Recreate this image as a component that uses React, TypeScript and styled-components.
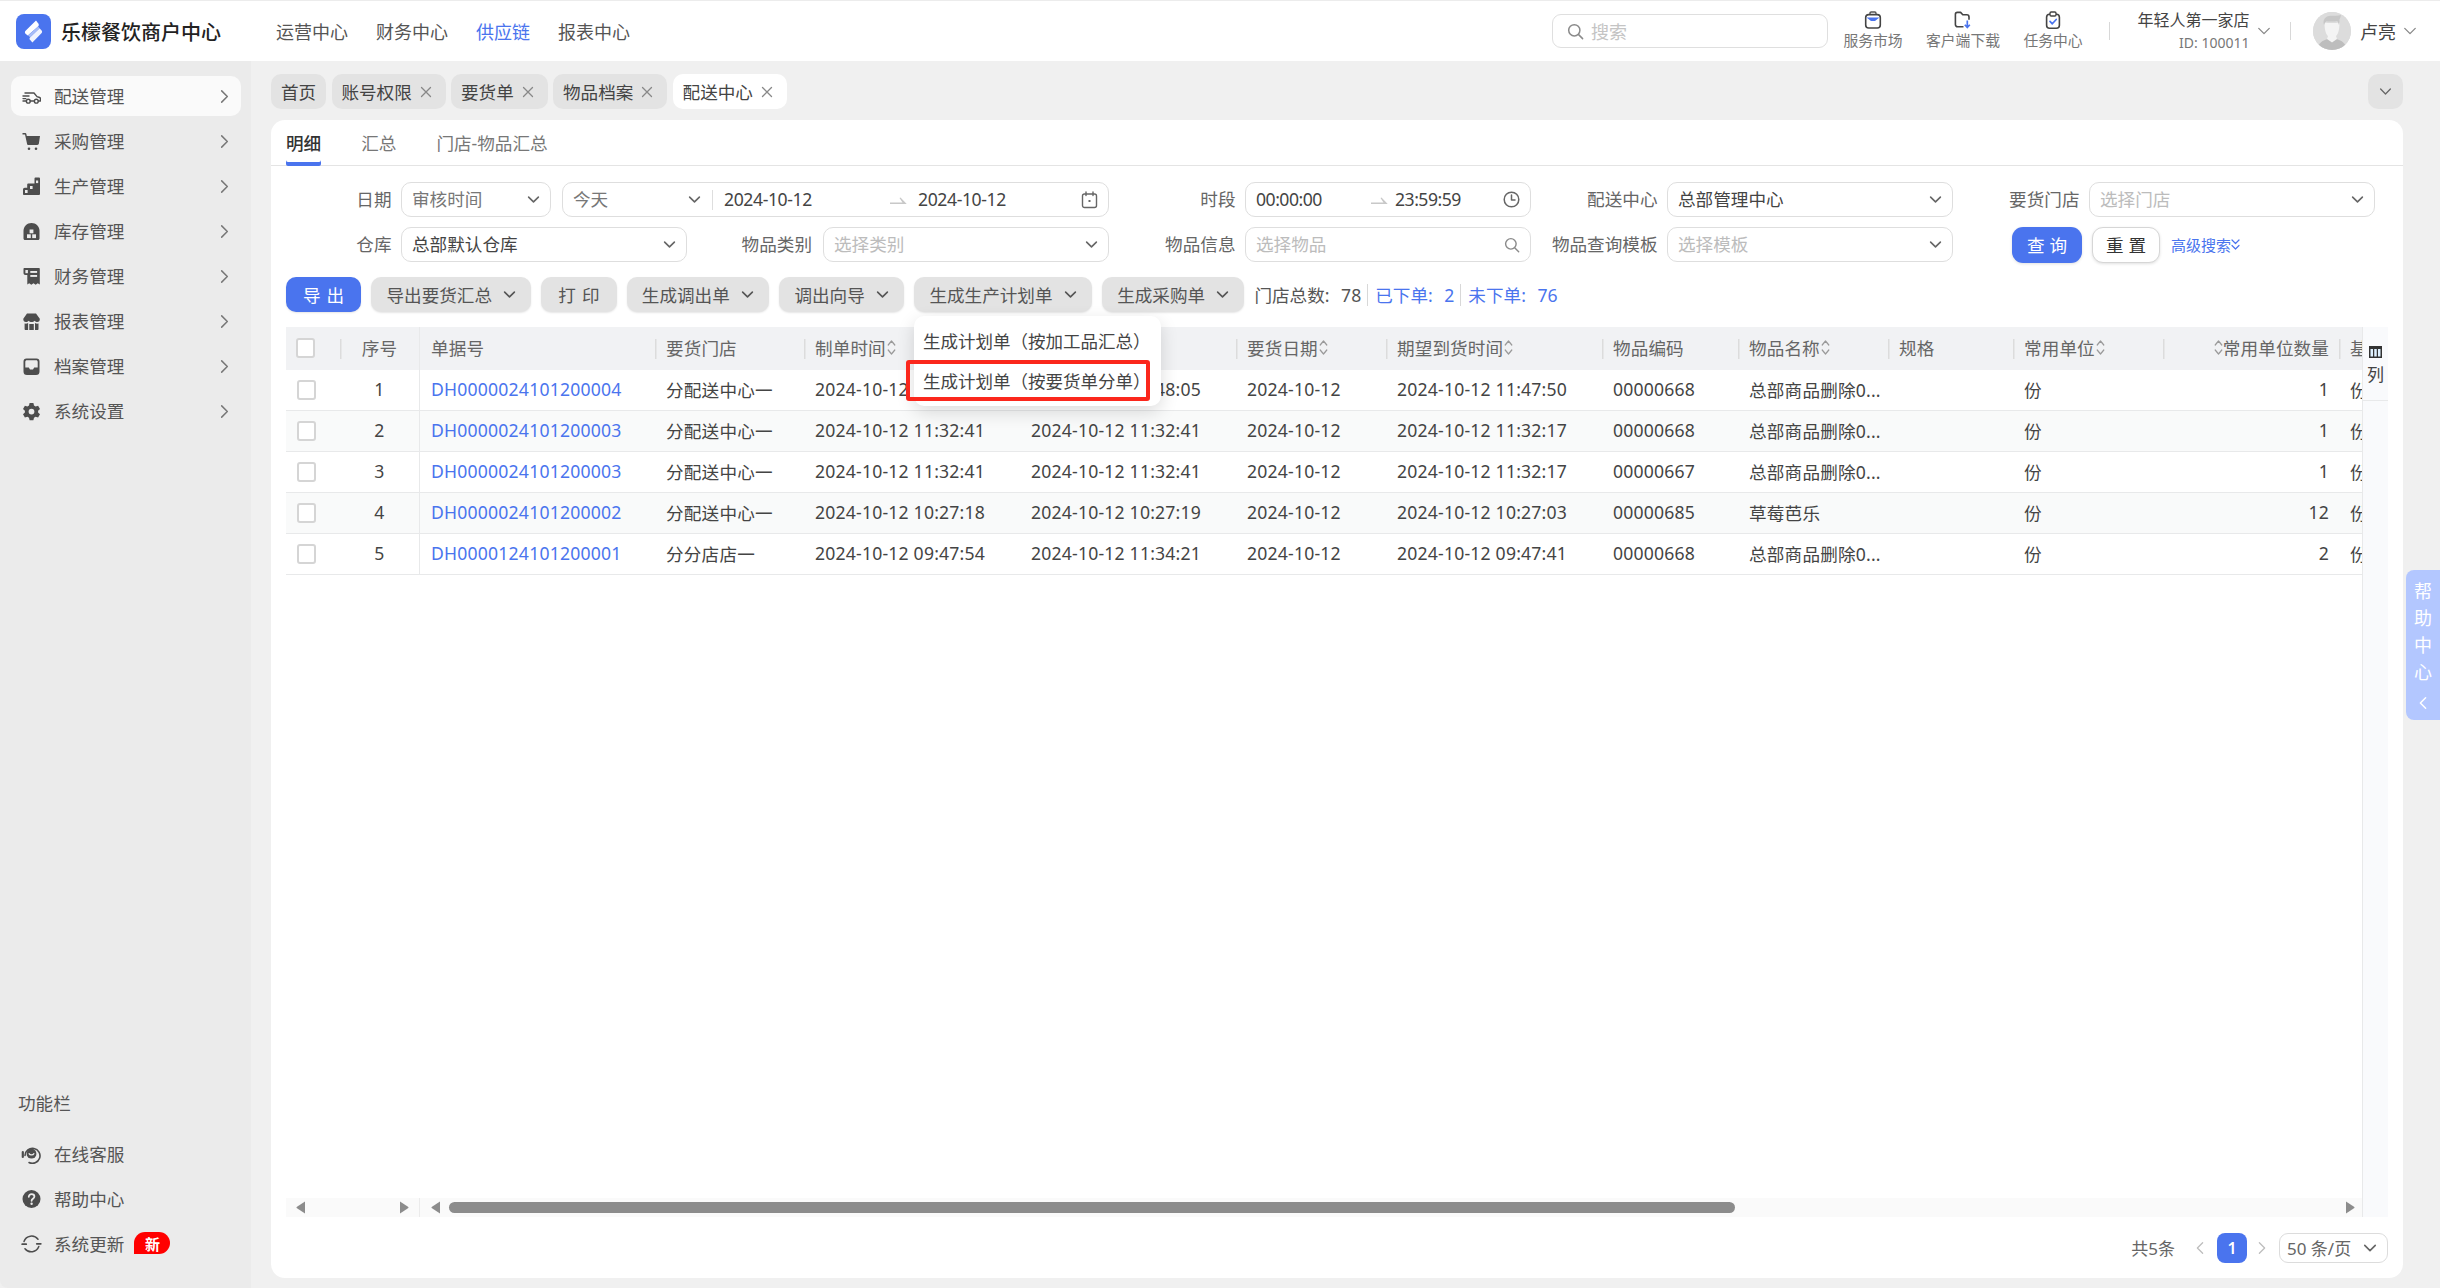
import React from 'react';
import styled, {createGlobalStyle} from 'styled-components';

const BLUE = '#4a74ee';
const FONT = `"Noto Sans", "Noto Sans CJK SC", sans-serif`;

const GlobalStyle = createGlobalStyle`
  html, body {
    margin: 0;
    padding: 0;
    background: #f0f0f0;
    font-family: ${FONT};
    color: #444;
  }
  * { box-sizing: border-box; }
`;

const Page = styled.div`
  height: 1288px;
  width: 2440px;
  display: flex;
  flex-direction: column;
  overflow: hidden;
  position: relative;
`;

/* ---------- top bar ---------- */
const Header = styled.header`
  height: 61px;
  flex: none;
  background: #fff;
  border-top: 1px solid #ececec;
  display: flex;
  align-items: center;
  padding: 0 23px 0 16px;
  & > svg { flex: none; }
`;
const Brand = styled.div`
  margin-left: 10px;
  font-size: 20px;
  font-weight: 500;
  color: #222;
  white-space: nowrap;
`;
const Nav = styled.nav`
  margin-left: 55px;
  display: flex;
  gap: 28px;
`;
const NavLink = styled.a<{$active?: boolean}>`
  font-size: 18px;
  color: ${p => (p.$active ? BLUE : '#555')};
`;
const Search = styled.div`
  margin-left: auto;
  width: 276px;
  height: 34px;
  border: 1.5px solid #dfdfdf;
  border-radius: 9px;
  display: flex;
  align-items: center;
  gap: 7px;
  padding-left: 14px;
  font-size: 18px;
  color: #c4c4c4;
`;
const HeadTool = styled.div`
  width: 90px;
  display: flex;
  flex-direction: column;
  align-items: center;
  gap: 1px;
  font-size: 14.8px;
  line-height: 21px;
  color: #777;
  white-space: nowrap;
  &:first-of-type { margin-left: 1px; }
`;
const HeadDivider = styled.div<{$left: number}>`
  width: 1.5px;
  height: 18px;
  background: #d8d8d8;
  margin-left: ${p => p.$left}px;
`;
const StoreInfo = styled.div`
  margin-left: 27px;
  text-align: right;
  white-space: nowrap;
`;
const StoreName = styled.div`
  font-size: 16px;
  line-height: 23px;
  color: #444;
`;
const StoreId = styled.div`
  font-size: 14px;
  line-height: 22px;
  color: #777;
`;
const HeadChevron = styled.div<{$left: number}>`
  margin-left: ${p => p.$left}px;
  display: flex;
  align-self: center;
  color: #888;
`;
const Avatar = styled.div`
  margin-left: 22px;
  width: 38px;
  height: 38px;
  border-radius: 50%;
  overflow: hidden;
  background: #dcdcdc;
  display: flex;
`;
const UserName = styled.div`
  margin-left: 9px;
  font-size: 18px;
  color: #444;
`;

/* ---------- body ---------- */
const Body = styled.div`
  flex: 1;
  display: flex;
  min-height: 0;
`;
const Sidebar = styled.aside`
  width: 251px;
  flex: none;
  background: #ebebeb;
  padding: 15px 10px 19px 11px;
  display: flex;
  flex-direction: column;
  border-bottom-left-radius: 8px;
`;
const SideItem = styled.div<{$active?: boolean; $tool?: boolean}>`
  height: 40px;
  flex: none;
  margin-bottom: 5px;
  border-radius: 10px;
  background: ${p => (p.$active ? '#fafafa' : 'transparent')};
  display: flex;
  align-items: center;
  padding: 0 9px 2px ${p => (p.$tool ? 10 : 11)}px;
  font-size: 17.6px;
  color: #555;
  & > svg:first-child {
    flex: none;
    margin: 2px ${p => (p.$tool ? 12 : 13)}px 0 0;
  }
`;
const SideArrow = styled.span`
  margin-left: auto;
  display: flex;
  color: #777;
  padding-top: 2px;
`;
const SideSpacer = styled.div`
  flex: 1;
`;
const SideTitle = styled.div`
  font-size: 17.6px;
  color: #555;
  margin: 0 0 18px 7px;
  line-height: 26px;
`;
const Badge = styled.span`
  margin-left: 10px;
  width: 36px;
  height: 22px;
  border-radius: 11px 11px 11px 0;
  background: #f00;
  color: #fff;
  font-size: 15px;
  font-weight: 700;
  display: flex;
  align-items: center;
  justify-content: center;
`;

const Main = styled.main`
  flex: 1;
  min-width: 0;
  padding: 13px 37px 10px 20px;
  display: flex;
  flex-direction: column;
`;
const TabBar = styled.div`
  height: 35px;
  flex: none;
  display: flex;
  gap: 5.7px;
  margin-bottom: 11px;
`;
const PageTab = styled.div<{$active?: boolean; $plain?: boolean}>`
  height: 35px;
  border-radius: 10px;
  background: ${p => (p.$active ? '#fff' : '#e3e3e3')};
  display: flex;
  align-items: center;
  gap: 8px;
  padding: 0 ${p => (p.$plain ? 10 : 14)}px 0 ${p => (p.$plain ? 10 : 9.5)}px;
  font-size: 17.6px;
  color: #444;
  white-space: nowrap;
`;
const TabClose = styled.span`
  display: flex;
  color: #888;
`;
const TabMore = styled.div`
  margin-left: auto;
  width: 35px;
  height: 35px;
  border-radius: 10px;
  background: #e3e3e3;
  color: #666;
  display: flex;
  align-items: center;
  justify-content: center;
`;

const Card = styled.section`
  flex: 1;
  min-height: 0;
  background: #fff;
  border-radius: 14px;
  display: flex;
  flex-direction: column;
`;
const SubTabs = styled.div`
  height: 46px;
  flex: none;
  border-bottom: 1.5px solid #e4e4e4;
  display: flex;
  gap: 40px;
  padding-left: 15px;
`;
const SubTab = styled.div<{$active?: boolean}>`
  height: 46px;
  line-height: 47px;
  font-size: 17.6px;
  font-weight: ${p => (p.$active ? 500 : 400)};
  color: ${p => (p.$active ? '#333' : '#777')};
  box-shadow: ${p => (p.$active ? `inset 0 -4px 0 ${BLUE}` : 'none')};
  border-radius: 0 0 2px 2px;
`;

/* ---------- filters ---------- */
const Filters = styled.div`
  margin-top: 16px;
  display: grid;
  grid-template-columns: 130px 708px 136px 286px 136px 286px 136px 286px;
  grid-auto-rows: 35px;
  row-gap: 10px;
  align-items: center;
`;
const FieldLabel = styled.label<{$pad?: number}>`
  text-align: right;
  padding-right: ${p => p.$pad ?? 9.5}px;
  padding-bottom: 2px;
  font-size: 17.6px;
  color: #666;
  white-space: nowrap;
`;
const Box = styled.div<{$width?: number}>`
  height: 35px;
  flex: ${p => (p.$width ? `none` : 1)};
  width: ${p => (p.$width ? `${p.$width}px` : 'auto')};
  min-width: 0;
  border: 1.5px solid #dedede;
  border-radius: 10px;
  display: flex;
  align-items: center;
  padding: 0 10px;
  font-size: 17.6px;
  white-space: nowrap;
`;
const FieldSplit = styled.div`
  display: flex;
  gap: 11px;
`;
const FieldTrio = styled.div`
  display: grid;
  grid-template-columns: 286px 136px 286px;
  align-items: center;
`;
const Value = styled.span<{$tone?: 'dark' | 'muted' | 'holder'}>`
  color: ${p => (p.$tone === 'muted' ? '#777' : p.$tone === 'holder' ? '#bcbcbc' : '#444')};
  padding-bottom: 2px;
`;
const BoxIcon = styled.span`
  margin-left: auto;
  display: flex;
  color: #666;
`;
const RangeSelect = styled.div`
  width: 140px;
  flex: none;
  height: 20px;
  display: flex;
  align-items: center;
  padding-right: 11px;
  border-right: 1.5px solid #dedede;
`;
const RangeValue = styled.span<{$width: number; $first?: boolean; $tight?: boolean}>`
  width: ${p => p.$width}px;
  flex: none;
  margin-left: ${p => (p.$first ? 11 : 0)}px;
  color: #444;
  letter-spacing: ${p => (p.$tight ? -0.5 : -0.4)}px;
  padding-bottom: 1px;
`;
const RangeArrow = styled.span<{$width: number}>`
  width: ${p => p.$width}px;
  flex: none;
  display: flex;
  color: #c8c8c8;
`;
const FilterActions = styled.div`
  grid-column: 7 / 9;
  display: flex;
  align-items: center;
  padding-left: 59px;
  gap: 10px;
  white-space: nowrap;
`;
const ActionButton = styled.button<{$primary?: boolean}>`
  height: 36px;
  width: ${p => (p.$primary ? 70 : 68)}px;
  border-radius: 11px;
  border: ${p => (p.$primary ? 'none' : '1.5px solid #d6d6d6')};
  background: ${p => (p.$primary ? BLUE : '#fff')};
  color: ${p => (p.$primary ? '#fff' : '#333')};
  font: 400 17.6px ${FONT};
  letter-spacing: 5px;
  text-indent: 5px;
  padding: 0;
  box-shadow: 0 1px 3px rgba(0, 0, 0, 0.12);
`;
const AdvancedLink = styled.a`
  font-size: 15px;
  color: ${BLUE};
  display: flex;
  align-items: center;
  margin-left: 1px;
`;

/* ---------- toolbar ---------- */
const Toolbar = styled.div`
  margin: 15px 15px 0;
  display: flex;
  align-items: center;
  gap: 10px;
  height: 35px;
  flex: none;
`;
const ToolWrap = styled.div`
  position: relative;
  display: flex;
`;
const ToolButton = styled.button<{$primary?: boolean}>`
  height: 35px;
  border: none;
  border-radius: 10px;
  background: ${p => (p.$primary ? BLUE : '#e3e3e3')};
  color: ${p => (p.$primary ? '#fff' : '#555')};
  font: 400 17.6px ${FONT};
  display: flex;
  align-items: center;
  gap: 11px;
  padding: 0 15.3px;
  white-space: nowrap;
  box-shadow: 0 1px 2px rgba(0, 0, 0, 0.1);
`;
const SpacedText = styled.span`
  letter-spacing: 6px;
  margin-right: -6px;
  padding: 0 1.7px;
`;
const Stats = styled.div`
  display: flex;
  align-items: center;
  font-size: 17.6px;
  word-spacing: 7px;
  white-space: nowrap;
`;
const Stat = styled.span<{$blue?: boolean; $sep?: boolean}>`
  color: ${p => (p.$blue ? BLUE : '#555')};
  padding: 0 6px 0 ${p => (p.$sep ? 7 : 0)}px;
  border-left: ${p => (p.$sep ? '1px solid #d8d8d8' : 'none')};
  line-height: 22px;
`;
const Menu = styled.div`
  position: absolute;
  top: calc(100% + 4px);
  left: 0;
  width: 247px;
  padding: 6px 0 4px 9px;
  background: #fff;
  border-radius: 10px;
  box-shadow: 0 6px 18px rgba(0, 0, 0, 0.14);
  z-index: 5;
`;
const MenuItem = styled.div`
  height: 40px;
  line-height: 38px;
  font-size: 17.5px;
  color: #444;
  white-space: nowrap;
`;
const RedFrame = styled.div`
  position: absolute;
  left: -8px;
  top: 44px;
  width: 244px;
  height: 41px;
  border: 4px solid #fb271c;
  border-radius: 3px;
`;

/* ---------- table ---------- */
const COLS = '54px 80px 235px 149px 216px 216px 150px 216px 136px 150px 125px 150px 176px 40px';

const TableBlock = styled.div`
  margin: 15px 15px 0;
  flex: 1;
  min-height: 0;
  display: flex;
`;
const TableMain = styled.div`
  flex: 1;
  min-width: 0;
  overflow: hidden;
  display: flex;
  flex-direction: column;
`;
const HeadRow = styled.div`
  height: 43px;
  flex: none;
  display: grid;
  grid-template-columns: ${COLS};
  background: #f1f2f4;
  align-items: center;
`;
const HeadCell = styled.div<{$sep?: boolean; $right?: boolean; $center?: boolean; $check?: boolean; $edge?: boolean}>`
  height: 43px;
  display: flex;
  align-items: center;
  justify-content: ${p => (p.$right ? 'flex-end' : p.$center ? 'center' : 'flex-start')};
  padding: 0 ${p => (p.$right ? 10 : 0)}px 2px ${p => (p.$check ? 10 : p.$right || p.$center ? 0 : 11)}px;
  font-size: 17.6px;
  letter-spacing: 0.1px;
  color: #666;
  white-space: nowrap;
  background: ${p => (p.$sep ? 'linear-gradient(#dcdcdc, #dcdcdc) left center / 1.5px 20px no-repeat' : 'none')};
  border-right: ${p => (p.$edge ? '1.5px solid #e8e9ea' : 'none')};
`;
const Row = styled.div<{$striped?: boolean}>`
  height: 41px;
  flex: none;
  display: grid;
  grid-template-columns: ${COLS};
  align-items: center;
  background: ${p => (p.$striped ? '#f9fafa' : '#fff')};
  border-bottom: 1.5px solid #e8e9ea;
`;
const Cell = styled.div<{$right?: boolean; $center?: boolean; $edge?: boolean; $check?: boolean}>`
  height: 100%;
  display: flex;
  align-items: center;
  justify-content: ${p => (p.$right ? 'flex-end' : p.$center ? 'center' : 'flex-start')};
  padding: 0 ${p => (p.$right ? 10 : 0)}px ${p => (p.$check ? 0 : 2)}px ${p => (p.$check ? 11 : p.$right || p.$center ? 0 : 11)}px;
  font-size: 17.6px;
  letter-spacing: 0.2px;
  color: #444;
  white-space: nowrap;
  overflow: hidden;
  border-right: ${p => (p.$edge ? '1.5px solid #e8e9ea' : 'none')};
`;
const DocLink = styled.a`
  color: ${BLUE};
`;
const Check = styled.span`
  width: 19px;
  height: 20px;
  flex: none;
  background: #fff;
  border: 2.5px solid #d5d5d5;
  border-radius: 3px;
`;
const TableFill = styled.div`
  flex: 1;
`;
const ScrollRow = styled.div`
  height: 19px;
  flex: none;
  background: #fafafa;
  display: flex;
  align-items: center;
  color: #8c8c8c;
`;
const ScrollFixed = styled.div`
  width: 134px;
  height: 19px;
  flex: none;
  display: flex;
  align-items: center;
  justify-content: space-between;
  padding: 0 10px;
  border-right: 1.5px solid #ebebeb;
`;
const ScrollTrack = styled.div`
  flex: 1;
  display: flex;
  align-items: center;
  padding: 0 7px 0 11px;
`;
const Thumb = styled.div`
  width: 1286px;
  height: 11px;
  margin-left: 8px;
  border-radius: 6px;
  background: #8c8c8c;
`;
const ScrollEnd = styled.span`
  margin-left: auto;
  display: flex;
`;
const ColPanel = styled.div`
  width: 26px;
  flex: none;
  background: #f9fafc;
  border-left: 1.5px solid #e8e9ea;
`;
const ColToggle = styled.div`
  height: 74px;
  border-bottom: 1.5px solid #e8e9ea;
  display: flex;
  flex-direction: column;
  align-items: center;
  padding-top: 19px;
  font-size: 17px;
  line-height: 26px;
  color: #444;
  gap: 4px;
  & > svg { flex: none; }
`;

const Pager = styled.div`
  height: 61px;
  flex: none;
  padding: 0 15px;
  display: flex;
  align-items: center;
  justify-content: flex-end;
  font-size: 17px;
  color: #666;
`;
const PagerArrow = styled.span<{$left: number; $right: number}>`
  display: flex;
  margin: 0 ${p => p.$right}px 0 ${p => p.$left}px;
  color: #bdbdbd;
`;
const PagerCurrent = styled.span`
  width: 30px;
  height: 30px;
  border-radius: 8px;
  background: ${BLUE};
  color: #fff;
  font-weight: 600;
  font-size: 16px;
  display: flex;
  align-items: center;
  justify-content: center;
`;
const PageSize = styled.div`
  width: 109px;
  height: 30px;
  border: 1.5px solid #dcdcdc;
  border-radius: 9px;
  display: flex;
  align-items: center;
  justify-content: space-between;
  padding: 0 10px 0 7px;
  white-space: nowrap;
`;

const HelpTab = styled.div`
  position: absolute;
  right: 0;
  top: 570px;
  width: 34px;
  height: 150px;
  background: #b3c7ff;
  border-radius: 8px 0 0 8px;
  color: #fff;
  font-size: 18px;
  line-height: 27px;
  display: flex;
  flex-direction: column;
  align-items: center;
  padding-top: 8px;
  & > svg { margin-top: 10px; }
`;

/* ---------- drawings ---------- */
const Chevron = ({size = 13, dir = 'down', sw = 1.6}: {size?: number; dir?: 'down' | 'up' | 'left' | 'right'; sw?: number}) => {
  const points = {
    down: '2,5 8,11 14,5',
    up: '2,11 8,5 14,11',
    left: '11,2 5,8 11,14',
    right: '5,2 11,8 5,14',
  }[dir];
  return (
    <svg width={size} height={size} viewBox="0 0 16 16" fill="none" stroke="currentColor" strokeWidth={sw * 16 / size} strokeLinecap="round" strokeLinejoin="round">
      <polyline points={points} />
    </svg>
  );
};

const CloseX = () => (
  <svg width="12" height="12" viewBox="0 0 12 12" stroke="currentColor" strokeWidth="1.3" strokeLinecap="round">
    <path d="M1.5 1.5l9 9M10.5 1.5l-9 9" />
  </svg>
);

const SortSvg = styled.svg`
  flex: none;
  margin-left: 1px;
`;
const Sort = () => (
  <SortSvg width="9" height="17" viewBox="0 0 9 17" fill="none" stroke="#9a9a9a" strokeWidth="1.2" strokeLinecap="round" strokeLinejoin="round">
    <path d="M1.2 6L4.5 2l3.3 4M1.2 11l3.3 4 3.3-4" />
  </SortSvg>
);

const Tri = ({dir}: {dir: 'left' | 'right'}) => (
  <svg width="10" height="13" viewBox="0 0 10 13" fill="currentColor">
    <path d={dir === 'left' ? 'M9 .5v12L1 7.3a1 1 0 0 1 0-1.6z' : 'M1 .5v12l8-5.2a1 1 0 0 0 0-1.6z'} />
  </svg>
);

const Logo = () => (
  <svg width="35" height="35" viewBox="0 0 35 35">
    <rect width="35" height="35" rx="8" fill={BLUE} />
    <path d="M20 6.5L9.6 16.8c-1 1-.9 2.4.2 3.3l2 1.5c3.2-3.2 7-5.8 10.2-9 1.2-1.2 1-2.6-.1-3.6z" fill="#fff" />
    <path d="M23.6 14.2l-9.4 9c-1 1-.8 2 0 2.8l2.2 2.4 8.8-8.8c1.2-1.2 1.2-2.4.2-3.4z" fill="#fff" opacity="0.92" />
    <path d="M12 21.6c3.2-3.2 7-5.8 10.2-9l1.4 1.6-9.4 9z" fill="#a9bdf7" />
  </svg>
);

const SearchIcon = ({size = 17}: {size?: number}) => (
  <svg width={size} height={size} viewBox="0 0 17 17" fill="none" stroke="#8a8a8a" strokeWidth="1.5" strokeLinecap="round">
    <circle cx="7.3" cy="7.3" r="5.6" />
    <path d="M11.6 11.6l4 4" />
  </svg>
);

const MarketIcon = () => (
  <svg width="18" height="18" viewBox="0 0 18 18" fill="none">
    <path d="M6 3.5V2.2C6 1.5 6.5 1 7.2 1h3.6c.7 0 1.2.5 1.2 1.2v1.3" stroke="#555" strokeWidth="1.4" />
    <rect x="1.7" y="3.6" width="14.6" height="13.4" rx="3" stroke="#444" strokeWidth="1.6" />
    <path d="M2.5 6.6h13L11 10H7z" fill={BLUE} />
  </svg>
);
const DownloadIcon = () => (
  <svg width="18" height="18" viewBox="0 0 18 18" fill="none">
    <path d="M9.5 15.8H3.6A2.2 2.2 0 0 1 1.4 13.6V3.4c0-1 .8-2 2-2h3.2l2.2 2.4h4c1.2 0 2.2 1 2.2 2.2v2.8" stroke="#444" strokeWidth="1.6" strokeLinejoin="round" />
    <path d="M13.3 9.5v6.5M10.8 13.7l2.5 2.8 2.5-2.8" stroke={BLUE} strokeWidth="1.7" strokeLinejoin="round" />
  </svg>
);
const TaskIcon = () => (
  <svg width="18" height="18" viewBox="0 0 18 18" fill="none">
    <rect x="2.6" y="3.2" width="12.8" height="14" rx="3" stroke="#444" strokeWidth="1.6" />
    <rect x="6" y="1" width="6" height="4" rx="1.2" fill="#fff" stroke="#444" strokeWidth="1.4" />
    <path d="M6 10.4l2.3 2.4L12.2 8.5" stroke={BLUE} strokeWidth="1.7" strokeLinecap="round" strokeLinejoin="round" />
  </svg>
);
const AvatarArt = () => (
  <svg width="38" height="38" viewBox="0 0 38 38">
    <rect width="38" height="38" fill="#dcdcdc" />
    <path d="M4 38c1-7 6-10 11-11h8c5 1 10 4 11 11z" fill="#bdbdbd" />
    <path d="M14 27l5 3.5 5-3.5-1-3h-8z" fill="#f4f4f4" />
    <path d="M11.5 10.5c0 9 2 15 7.5 15s7.5-6 7.5-15c-4 .8-11 .8-15 0z" fill="#f4f4f4" />
    <path d="M11 13C9.5 8 12 4 18 3.8c3-.1 7 .2 10-.8-.4 2.4-1 3.5-1.6 4.6.2 2 .1 3.8-.4 5.4-.6-2-1-3-1.8-4-3.6.8-7.6.6-11 .2-1 1-1.8 2.4-2.2 3.8z" fill="#c7c7c7" />
  </svg>
);

const IconBase = ({children}: {children: React.ReactNode}) => (
  <svg width="19" height="19" viewBox="0 0 19 19" fill="#4d4d4d">{children}</svg>
);
const TruckIcon = () => (
  <IconBase>
    <path d="M3 6h9l3 3.6 2.6.9c.6.2.9.7.9 1.3V14h-2M4.300 14H1M8.300 14h4M1 9h6M1 11.600h2.800" fill="none" stroke="#4d4d4d" strokeWidth="1.4" strokeLinecap="round" strokeLinejoin="round" />
    <circle cx="6.300" cy="14.200" r="1.900" fill="none" stroke="#4d4d4d" strokeWidth="1.4" />
    <circle cx="14.300" cy="14.200" r="1.900" fill="none" stroke="#4d4d4d" strokeWidth="1.4" />
  </IconBase>
);
const CartIcon = () => (
  <IconBase>
    <path d="M.5 1h2.800c.5 0 .9.3 1 .8L4.800 4H18l-1.100 7.600c-.1.800-.8 1.400-1.600 1.400H6.300c-.6 0-1.100-.4-1.200-1L3 2.500H.5z" />
    <circle cx="7" cy="16.700" r="1.300" />
    <circle cx="14" cy="16.700" r="1.300" />
  </IconBase>
);
const ProdIcon = () => (
  <IconBase>
    <path d="M12.500 1.500c0-.5.400-.9.900-.9h3.700c.5 0 .9.400.9.900V17c0 .5-.4.900-.9.900H2c-.5 0-1-.4-1-1v-4.400c0-1 .8-1.700 1.800-1.700h2.400V7.500c0-.5.400-.9.900-.9h6.400z" />
    <rect x="3" y="13" width="2.600" height="3" fill="#ebebeb" />
    <rect x="8" y="9" width="2.600" height="3" fill="#ebebeb" />
    <rect x="14" y="3.500" width="2.200" height="2.600" fill="#ebebeb" />
  </IconBase>
);
const StockIcon = () => (
  <IconBase>
    <path d="M9.500 1C5 1 1.500 4.500 1.500 9v7.500c0 .8.600 1.500 1.500 1.500h13c.9 0 1.500-.7 1.500-1.500V9c0-4.500-3.500-8-8-8z" />
    <rect x="7.600" y="7.500" width="3.800" height="3.800" fill="#ebebeb" />
    <rect x="5" y="12.300" width="3.800" height="3.800" fill="#ebebeb" />
    <rect x="10.200" y="12.300" width="3.800" height="3.800" fill="#ebebeb" />
  </IconBase>
);
const BillIcon = () => (
  <IconBase>
    <path d="M2.500 1h14.300c.6 0 1 .4 1 1v15.500l-2.100-1.300-2 1.500-2.200-1.500-2.200 1.500-2.100-1.500-1.900 1.300V8H3.500c-1.300 0-2-1-2-2V2c0-.6.400-1 1-1z" />
    <rect x="8.300" y="4" width="6.800" height="1.900" fill="#ebebeb" />
    <rect x="8.300" y="8" width="6.800" height="1.900" fill="#ebebeb" />
    <rect x="3.400" y="3" width="2.500" height="3.200" fill="#ebebeb" />
  </IconBase>
);
const ShopIcon = () => (
  <IconBase>
    <path d="M5 1.500h9l3.800 5.200c.3 2-1 3.300-2.500 3.300-1 0-2-.5-2.700-1.300-.7.800-1.700 1.300-3 1.300s-2.200-.5-3-1.300C6 9.500 5 10 4 10 2.400 10 1 8.700 1.300 6.700z" />
    <path d="M2.600 11.500c1.300.3 2.500.1 3.500-.5v6.900H3.600c-.6 0-1-.4-1-1zM16.500 11.500c-1.300.3-2.500.1-3.500-.5v6.900h2.500c.6 0 1-.4 1-1zM7.300 12h4.500v5.900H7.300z" />
  </IconBase>
);
const ArchiveIcon = () => (
  <IconBase>
    <path d="M4.500 1.500h10a3 3 0 0 1 3 3v10a3.500 3.500 0 0 1-3.500 3.500H5a3.500 3.500 0 0 1-3.500-3.500v-10a3 3 0 0 1 3-3z" />
    <path d="M3.300 10.500V4.800c0-.9.700-1.500 1.500-1.500h9.400c.8 0 1.500.6 1.500 1.500v5.700h-3.500l-1.200 2h-3l-1.200-2z" fill="#ebebeb" />
  </IconBase>
);
const GearIcon = () => (
  <IconBase>
    <path fillRule="evenodd" d="M7.600 1h3.800l.6 2.500 1.600.9 2.500-.7 1.900 3.200-1.900 1.800v1.800l1.900 1.800-1.900 3.200-2.500-.7-1.600.9-.6 2.500H7.600L7 15.700l-1.600-.9-2.500.7L1 12.300l1.900-1.800V8.700L1 6.900l1.900-3.200 2.500.7L7 3.500zM9.500 6.700a2.900 2.900 0 1 0 0 5.800 2.900 2.900 0 0 0 0-5.800z" />
  </IconBase>
);
const ServiceIcon = () => (
  <svg width="21" height="20" viewBox="0 0 21 20" fill="none" stroke="#4d4d4d">
    <path d="M4 11.500a7.500 7.500 0 1 1 4 7" strokeWidth="1.600" strokeLinecap="round" />
    <circle cx="10.500" cy="9.700" r="4.900" fill="#4d4d4d" stroke="none" />
    <path d="M8.200 9.700c.5 1.500 4 1.500 4.600 0" stroke="#ebebeb" strokeWidth="1.300" strokeLinecap="round" />
    <path d="M1.800 8v5" strokeWidth="2.200" strokeLinecap="round" />
  </svg>
);
const HelpIcon = () => (
  <svg width="21" height="20" viewBox="0 0 21 20">
    <circle cx="10.500" cy="10" r="9" fill="#4d4d4d" />
    <path d="M7.800 7.800c0-1.600 1.200-2.600 2.800-2.600s2.800 1 2.800 2.400c0 2.200-2.800 2.200-2.800 4.200" fill="none" stroke="#ebebeb" strokeWidth="1.800" strokeLinecap="round" />
    <circle cx="10.600" cy="14.800" r="1.200" fill="#ebebeb" />
  </svg>
);
const UpdateIcon = () => (
  <svg width="21" height="20" viewBox="0 0 21 20" fill="none" stroke="#4d4d4d" strokeWidth="1.500" strokeLinecap="round" strokeLinejoin="round">
    <path d="M3 7.500A8 8 0 0 1 17 5.300" />
    <path d="M17.800 12.500A8 8 0 0 1 4 14.700" />
    <path d="M1.200 10.200h4M15.800 9.800h4" strokeWidth="1.800" />
  </svg>
);
const CalendarIcon = () => (
  <svg width="17" height="18" viewBox="0 0 17 18" fill="none" stroke="#666" strokeWidth="1.400">
    <rect x="1.500" y="3" width="14" height="13.500" rx="2" />
    <path d="M5 1v3.500M12 1v3.500" strokeLinecap="round" />
    <path d="M7.500 10h2" strokeWidth="2" />
  </svg>
);
const ClockIcon = () => (
  <svg width="17" height="17" viewBox="0 0 17 17" fill="none" stroke="#666" strokeWidth="1.500">
    <circle cx="8.500" cy="8.500" r="7.300" />
    <path d="M8.500 4v5h3.500" strokeLinecap="round" strokeLinejoin="round" />
  </svg>
);
const RangeArrowIcon = () => (
  <svg width="17" height="10" viewBox="0 0 17 10" fill="currentColor">
    <path d="M0 7.500h12.500L9.500 3l1-.6L16.500 8.800V9H0z" />
  </svg>
);
const ColumnsIcon = () => (
  <svg width="13" height="12" viewBox="0 0 13 12">
    <rect width="13" height="12" fill="#333" />
    <rect x="1.500" y="3" width="2.500" height="7.500" fill="#dff1ff" />
    <rect x="5.250" y="3" width="2.500" height="7.500" fill="#dff1ff" />
    <rect x="9" y="3" width="2.500" height="7.500" fill="#dff1ff" />
  </svg>
);
const DoubleDown = () => (
  <svg width="9" height="13" viewBox="0 0 9 13" fill="none" stroke={BLUE} strokeWidth="1.200" strokeLinecap="round" strokeLinejoin="round">
    <path d="M1 2l3.500 3.500L8 2M1 7.500L4.500 11 8 7.500" />
  </svg>
);

/* ---------- data ---------- */
const SIDE_MENU: [string, React.ReactNode][] = [
  ['配送管理', <TruckIcon />],
  ['采购管理', <CartIcon />],
  ['生产管理', <ProdIcon />],
  ['库存管理', <StockIcon />],
  ['财务管理', <BillIcon />],
  ['报表管理', <ShopIcon />],
  ['档案管理', <ArchiveIcon />],
  ['系统设置', <GearIcon />],
];

const HEAD_COLS = [
  {title: '要货门店'},
  {title: '制单时间', sort: true},
  {title: '审核时间', sort: true},
  {title: '要货日期', sort: true},
  {title: '期望到货时间', sort: true},
  {title: '物品编码'},
  {title: '物品名称', sort: true},
  {title: '规格'},
  {title: '常用单位', sort: true},
];

const ROWS = [
  ['DH0000024101200004', '分配送中心一', '2024-10-12 11:48:04', '2024-10-12 11:48:05', '2024-10-12 11:47:50', '00000668', '总部商品删除0...', '1'],
  ['DH0000024101200003', '分配送中心一', '2024-10-12 11:32:41', '2024-10-12 11:32:41', '2024-10-12 11:32:17', '00000668', '总部商品删除0...', '1'],
  ['DH0000024101200003', '分配送中心一', '2024-10-12 11:32:41', '2024-10-12 11:32:41', '2024-10-12 11:32:17', '00000667', '总部商品删除0...', '1'],
  ['DH0000024101200002', '分配送中心一', '2024-10-12 10:27:18', '2024-10-12 10:27:19', '2024-10-12 10:27:03', '00000685', '草莓芭乐', '12'],
  ['DH0000124101200001', '分分店店一', '2024-10-12 09:47:54', '2024-10-12 11:34:21', '2024-10-12 09:47:41', '00000668', '总部商品删除0...', '2'],
];

const DropdownButton = ({label}: {label: string}) => (
  <ToolButton>
    {label}
    <Chevron />
  </ToolButton>
);

export default function App() {
  return (
    <Page>
      <GlobalStyle />
      <Header>
        <Logo />
        <Brand>乐檬餐饮商户中心</Brand>
        <Nav>
          <NavLink>运营中心</NavLink>
          <NavLink>财务中心</NavLink>
          <NavLink $active>供应链</NavLink>
          <NavLink>报表中心</NavLink>
        </Nav>
        <Search>
          <SearchIcon />
          搜索
        </Search>
        <HeadTool><MarketIcon />服务市场</HeadTool>
        <HeadTool><DownloadIcon />客户端下载</HeadTool>
        <HeadTool><TaskIcon />任务中心</HeadTool>
        <HeadDivider $left={11} />
        <StoreInfo>
          <StoreName>年轻人第一家店</StoreName>
          <StoreId>ID: 100011</StoreId>
        </StoreInfo>
        <HeadChevron $left={7}><Chevron size={14} sw={1.3} /></HeadChevron>
        <HeadDivider $left={19} />
        <Avatar><AvatarArt /></Avatar>
        <UserName>卢亮</UserName>
        <HeadChevron $left={7}><Chevron size={14} sw={1.3} /></HeadChevron>
      </Header>
      <Body>
        <Sidebar>
          {SIDE_MENU.map(([name, icon], i) => (
            <SideItem key={name} $active={i === 0}>
              {icon}
              {name}
              <SideArrow><Chevron dir="right" size={15} sw={1.5} /></SideArrow>
            </SideItem>
          ))}
          <SideSpacer />
          <SideTitle>功能栏</SideTitle>
          <SideItem $tool><ServiceIcon />在线客服</SideItem>
          <SideItem $tool><HelpIcon />帮助中心</SideItem>
          <SideItem $tool><UpdateIcon />系统更新<Badge>新</Badge></SideItem>
        </Sidebar>
        <Main>
          <TabBar>
            <PageTab $plain>首页</PageTab>
            <PageTab>账号权限<TabClose><CloseX /></TabClose></PageTab>
            <PageTab>要货单<TabClose><CloseX /></TabClose></PageTab>
            <PageTab>物品档案<TabClose><CloseX /></TabClose></PageTab>
            <PageTab $active>配送中心<TabClose><CloseX /></TabClose></PageTab>
            <TabMore><Chevron size={13} sw={1.3} /></TabMore>
          </TabBar>
          <Card>
            <SubTabs>
              <SubTab $active>明细</SubTab>
              <SubTab>汇总</SubTab>
              <SubTab>门店-物品汇总</SubTab>
            </SubTabs>
            <Filters>
              <FieldLabel>日期</FieldLabel>
              <FieldSplit>
                <Box $width={150}>
                  <Value $tone="muted">审核时间</Value>
                  <BoxIcon><Chevron /></BoxIcon>
                </Box>
                <Box>
                  <RangeSelect>
                    <Value $tone="muted">今天</Value>
                    <BoxIcon><Chevron /></BoxIcon>
                  </RangeSelect>
                  <RangeValue $first $width={166}>2024-10-12</RangeValue>
                  <RangeArrow $width={28}><RangeArrowIcon /></RangeArrow>
                  <RangeValue $width={100}>2024-10-12</RangeValue>
                  <BoxIcon><CalendarIcon /></BoxIcon>
                </Box>
              </FieldSplit>
              <FieldLabel>时段</FieldLabel>
              <Box>
                <RangeValue $tight $width={115}>00:00:00</RangeValue>
                <RangeArrow $width={24}><RangeArrowIcon /></RangeArrow>
                <RangeValue $tight $width={80}>23:59:59</RangeValue>
                <BoxIcon><ClockIcon /></BoxIcon>
              </Box>
              <FieldLabel>配送中心</FieldLabel>
              <Box>
                <Value>总部管理中心</Value>
                <BoxIcon><Chevron /></BoxIcon>
              </Box>
              <FieldLabel>要货门店</FieldLabel>
              <Box>
                <Value $tone="holder">选择门店</Value>
                <BoxIcon><Chevron /></BoxIcon>
              </Box>

              <FieldLabel>仓库</FieldLabel>
              <FieldTrio>
                <Box>
                  <Value>总部默认仓库</Value>
                  <BoxIcon><Chevron /></BoxIcon>
                </Box>
                <FieldLabel $pad={11}>物品类别</FieldLabel>
                <Box>
                  <Value $tone="holder">选择类别</Value>
                  <BoxIcon><Chevron /></BoxIcon>
                </Box>
              </FieldTrio>
              <FieldLabel>物品信息</FieldLabel>
              <Box>
                <Value $tone="holder">选择物品</Value>
                <BoxIcon><SearchIcon size={16} /></BoxIcon>
              </Box>
              <FieldLabel>物品查询模板</FieldLabel>
              <Box>
                <Value $tone="holder">选择模板</Value>
                <BoxIcon><Chevron /></BoxIcon>
              </Box>
              <FilterActions>
                <ActionButton $primary>查询</ActionButton>
                <ActionButton>重置</ActionButton>
                <AdvancedLink>高级搜索<DoubleDown /></AdvancedLink>
              </FilterActions>
            </Filters>
            <Toolbar>
              <ToolButton $primary><SpacedText>导出</SpacedText></ToolButton>
              <DropdownButton label="导出要货汇总" />
              <ToolButton><SpacedText>打印</SpacedText></ToolButton>
              <DropdownButton label="生成调出单" />
              <DropdownButton label="调出向导" />
              <ToolWrap>
                <DropdownButton label="生成生产计划单" />
                <Menu>
                  <MenuItem>生成计划单（按加工品汇总）</MenuItem>
                  <MenuItem>生成计划单（按要货单分单）</MenuItem>
                  <RedFrame />
                </Menu>
              </ToolWrap>
              <DropdownButton label="生成采购单" />
              <Stats>
                <Stat>门店总数: 78</Stat>
                <Stat $blue $sep>已下单: 2</Stat>
                <Stat $blue $sep>未下单: 76</Stat>
              </Stats>
            </Toolbar>
            <TableBlock>
              <TableMain>
                <HeadRow>
                  <HeadCell $check><Check /></HeadCell>
                  <HeadCell $center $sep $edge>序号</HeadCell>
                  <HeadCell>单据号</HeadCell>
                  {HEAD_COLS.map(col => (
                    <HeadCell key={col.title} $sep>
                      {col.title}
                      {col.sort && <Sort />}
                    </HeadCell>
                  ))}
                  <HeadCell $sep $right><Sort />常用单位数量</HeadCell>
                  <HeadCell $sep>基本单位</HeadCell>
                </HeadRow>
                {ROWS.map((row, i) => (
                  <Row key={i} $striped={i % 2 === 1}>
                    <Cell $check><Check /></Cell>
                    <Cell $center $edge>{i + 1}</Cell>
                    <Cell><DocLink>{row[0]}</DocLink></Cell>
                    <Cell>{row[1]}</Cell>
                    <Cell>{row[2]}</Cell>
                    <Cell>{row[3]}</Cell>
                    <Cell>2024-10-12</Cell>
                    <Cell>{row[4]}</Cell>
                    <Cell>{row[5]}</Cell>
                    <Cell>{row[6]}</Cell>
                    <Cell />
                    <Cell>份</Cell>
                    <Cell $right>{row[7]}</Cell>
                    <Cell>份</Cell>
                  </Row>
                ))}
                <TableFill />
                <ScrollRow>
                  <ScrollFixed><Tri dir="left" /><Tri dir="right" /></ScrollFixed>
                  <ScrollTrack>
                    <Tri dir="left" />
                    <Thumb />
                    <ScrollEnd><Tri dir="right" /></ScrollEnd>
                  </ScrollTrack>
                </ScrollRow>
              </TableMain>
              <ColPanel>
                <ColToggle>
                  <ColumnsIcon />
                  列
                </ColToggle>
              </ColPanel>
            </TableBlock>
            <Pager>
              共5条
              <PagerArrow $left={18} $right={10}><Chevron dir="left" size={14} sw={1.3} /></PagerArrow>
              <PagerCurrent>1</PagerCurrent>
              <PagerArrow $left={8} $right={10}><Chevron dir="right" size={14} sw={1.3} /></PagerArrow>
              <PageSize>
                50 条/页
                <Chevron size={14} sw={1.6} />
              </PageSize>
            </Pager>
          </Card>
        </Main>
      </Body>
      <HelpTab>
        <span>帮</span>
        <span>助</span>
        <span>中</span>
        <span>心</span>
        <Chevron dir="left" size={14} sw={1.5} />
      </HelpTab>
    </Page>
  );
}
